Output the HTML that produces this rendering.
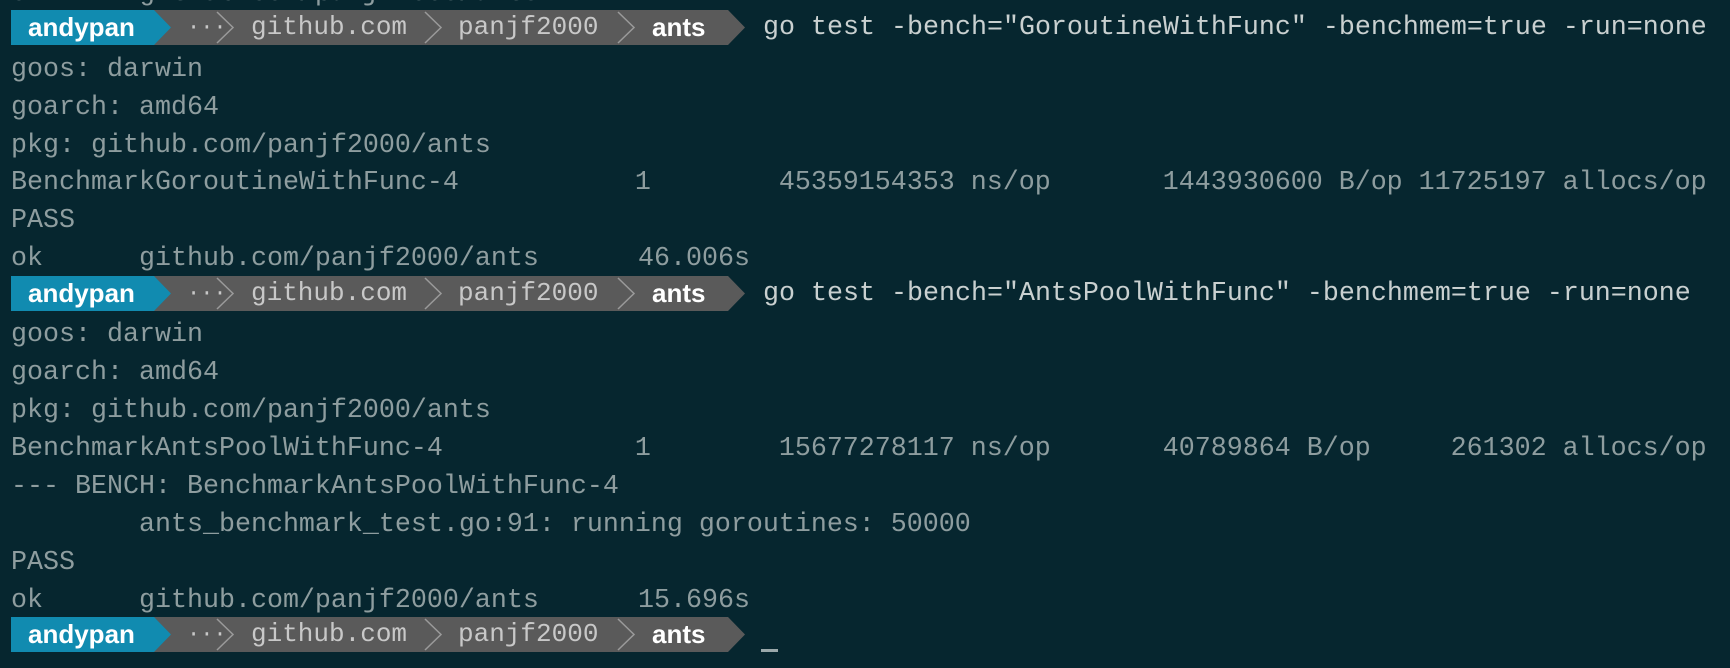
<!DOCTYPE html>
<html><head><meta charset="utf-8"><style>
html,body{margin:0;padding:0;background:#06262f;width:1730px;height:668px;overflow:hidden}
.r{position:absolute;left:11px;height:38px;line-height:38px;font-family:"Liberation Mono",monospace;font-size:26.67px;color:#8e9d9f;white-space:pre}
.bar{position:absolute;left:11px;height:35px}
.bar svg{position:absolute;left:0;top:0}
.t{position:absolute;top:0;height:35px;line-height:35px;font-size:26px;white-space:pre}
.b{font-family:"Liberation Sans",sans-serif;font-weight:bold;color:#fff}
.m{font-family:"Liberation Mono",monospace;color:#c8c8c8}
.cmd{position:absolute;left:763px;height:38px;line-height:38px;font-family:"Liberation Mono",monospace;font-size:26.67px;color:#c9d0d0;white-space:pre}
.tm{position:absolute;left:638px}
</style></head><body>
<div class="r" style="top:-25px">ok      github.com/panjf2000/ants</div>

<div class="bar" style="top:10px"><svg width="740" height="35"><polygon points="0,0 717,0 734,17.5 717,35 0,35" fill="#5a5a5a"/><polygon points="0,0 143,0 160,17.5 143,35 0,35" fill="#118bb0"/><g stroke="#9a9a9a" stroke-width="1.5" fill="none"><polyline points="206,2 222,17.5 206,33"/><polyline points="414,2 430,17.5 414,33"/><polyline points="607,2 623,17.5 607,33"/></g></svg><span class="t b" style="left:17px">andypan</span><span class="t m" style="left:176px;font-size:22px">···</span><span class="t m" style="left:240px">github.com</span><span class="t m" style="left:447px">panjf2000</span><span class="t b" style="left:641px">ants</span></div>
<div class="cmd" style="top:9px">go test -bench="GoroutineWithFunc" -benchmem=true -run=none</div>
<div class="r" style="top:51px">goos: darwin</div>
<div class="r" style="top:89px">goarch: amd64</div>
<div class="r" style="top:127px">pkg: github.com/panjf2000/ants</div>
<div class="r" style="top:164px">BenchmarkGoroutineWithFunc-4           1        45359154353 ns/op       1443930600 B/op 11725197 allocs/op</div>
<div class="r" style="top:202px">PASS</div>
<div class="r" style="top:240px">ok      github.com/panjf2000/ants</div>
<div class="r tm" style="top:240px">46.006s</div>

<div class="bar" style="top:276px"><svg width="740" height="35"><polygon points="0,0 717,0 734,17.5 717,35 0,35" fill="#5a5a5a"/><polygon points="0,0 143,0 160,17.5 143,35 0,35" fill="#118bb0"/><g stroke="#9a9a9a" stroke-width="1.5" fill="none"><polyline points="206,2 222,17.5 206,33"/><polyline points="414,2 430,17.5 414,33"/><polyline points="607,2 623,17.5 607,33"/></g></svg><span class="t b" style="left:17px">andypan</span><span class="t m" style="left:176px;font-size:22px">···</span><span class="t m" style="left:240px">github.com</span><span class="t m" style="left:447px">panjf2000</span><span class="t b" style="left:641px">ants</span></div>
<div class="cmd" style="top:275px">go test -bench="AntsPoolWithFunc" -benchmem=true -run=none</div>
<div class="r" style="top:316px">goos: darwin</div>
<div class="r" style="top:354px">goarch: amd64</div>
<div class="r" style="top:392px">pkg: github.com/panjf2000/ants</div>
<div class="r" style="top:430px">BenchmarkAntsPoolWithFunc-4            1        15677278117 ns/op       40789864 B/op     261302 allocs/op</div>
<div class="r" style="top:468px">--- BENCH: BenchmarkAntsPoolWithFunc-4</div>
<div class="r" style="top:506px">        ants_benchmark_test.go:91: running goroutines: 50000</div>
<div class="r" style="top:544px">PASS</div>
<div class="r" style="top:582px">ok      github.com/panjf2000/ants</div>
<div class="r tm" style="top:582px">15.696s</div>

<div class="bar" style="top:617px"><svg width="740" height="35"><polygon points="0,0 717,0 734,17.5 717,35 0,35" fill="#5a5a5a"/><polygon points="0,0 143,0 160,17.5 143,35 0,35" fill="#118bb0"/><g stroke="#9a9a9a" stroke-width="1.5" fill="none"><polyline points="206,2 222,17.5 206,33"/><polyline points="414,2 430,17.5 414,33"/><polyline points="607,2 623,17.5 607,33"/></g></svg><span class="t b" style="left:17px">andypan</span><span class="t m" style="left:176px;font-size:22px">···</span><span class="t m" style="left:240px">github.com</span><span class="t m" style="left:447px">panjf2000</span><span class="t b" style="left:641px">ants</span></div>
<div style="position:absolute;left:761px;top:649px;width:17px;height:3px;background:#9aa8aa"></div>
</body></html>
